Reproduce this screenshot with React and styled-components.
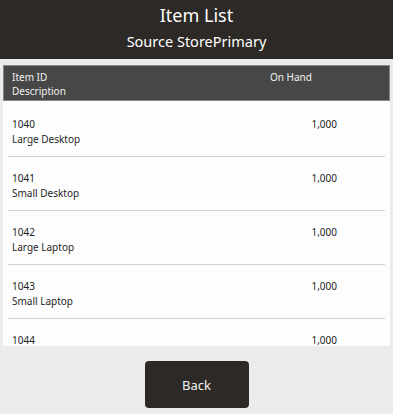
import React from "react";
import styled, { createGlobalStyle } from "styled-components";

const Global = createGlobalStyle`
  html, body { margin: 0; padding: 0; }
  body {
    background: #ebebeb;
    font-family: "Noto Sans", "Open Sans", sans-serif;
    color: #1f1f1f;
  }
`;

const Page = styled.div`
  width: 393px;
  height: 414px;
  display: flex;
  flex-direction: column;
  overflow: hidden;
`;

const Header = styled.header`
  height: 59px;
  background: #2d2926;
  color: #fff;
  display: flex;
  flex-direction: column;
  align-items: center;
  box-sizing: border-box;
  padding-top: 3px;
`;

const Title = styled.div`
  font-size: 18px;
  line-height: 25px;
`;

const Subtitle = styled.div`
  font-size: 14.5px;
  line-height: 22px;
  margin-top: 2px;
`;

const Content = styled.main`
  padding: 6px 3px 0;
  display: flex;
  flex-direction: column;
`;

const Cols = styled.div`
  display: grid;
  grid-template-columns: 1fr 66px;
  column-gap: 0;
`;

const TableHead = styled(Cols)`
  height: 36px;
  box-sizing: border-box;
  background: #474747;
  border: 1px solid #7f8a88;
  color: #f2f2f2;
  font-size: 10px;
  line-height: 14px;
  padding: 4px 53px 0 8px;
`;

const List = styled.div`
  height: 245px;
  background: #fdfdfd;
  overflow: hidden;
  padding: 2px 5px 0;
  box-sizing: border-box;
`;

const Row = styled(Cols)`
  height: 54px;
  box-sizing: border-box;
  border-bottom: 1px solid #d2d2d2;
  padding: 14px 48px 0 4px;
  font-size: 10px;
  line-height: 15px;
`;

const Qty = styled.div`
  text-align: right;
`;

const Footer = styled.div`
  display: flex;
  justify-content: center;
  padding-top: 15px;
`;

const Button = styled.button`
  width: 104px;
  height: 47px;
  background: #2d2926;
  color: #f4f4f4;
  border: none;
  border-radius: 4px;
  font-family: inherit;
  font-size: 13px;
  cursor: pointer;
`;

const items = [
  ["1040", "Large Desktop"],
  ["1041", "Small Desktop"],
  ["1042", "Large Laptop"],
  ["1043", "Small Laptop"],
  ["1044", ""],
];

export default function App() {
  return (
    <Page>
      <Global />
      <Header>
        <Title>Item List</Title>
        <Subtitle>Source StorePrimary</Subtitle>
      </Header>
      <Content>
        <TableHead>
          <div>
            Item ID
            <br />
            Description
          </div>
          <div>On Hand</div>
        </TableHead>
        <List>
          {items.map(([id, desc]) => (
            <Row key={id}>
              <div>
                {id}
                {desc && (
                  <>
                    <br />
                    {desc}
                  </>
                )}
              </div>
              <Qty>1,000</Qty>
            </Row>
          ))}
        </List>
      </Content>
      <Footer>
        <Button>Back</Button>
      </Footer>
    </Page>
  );
}
